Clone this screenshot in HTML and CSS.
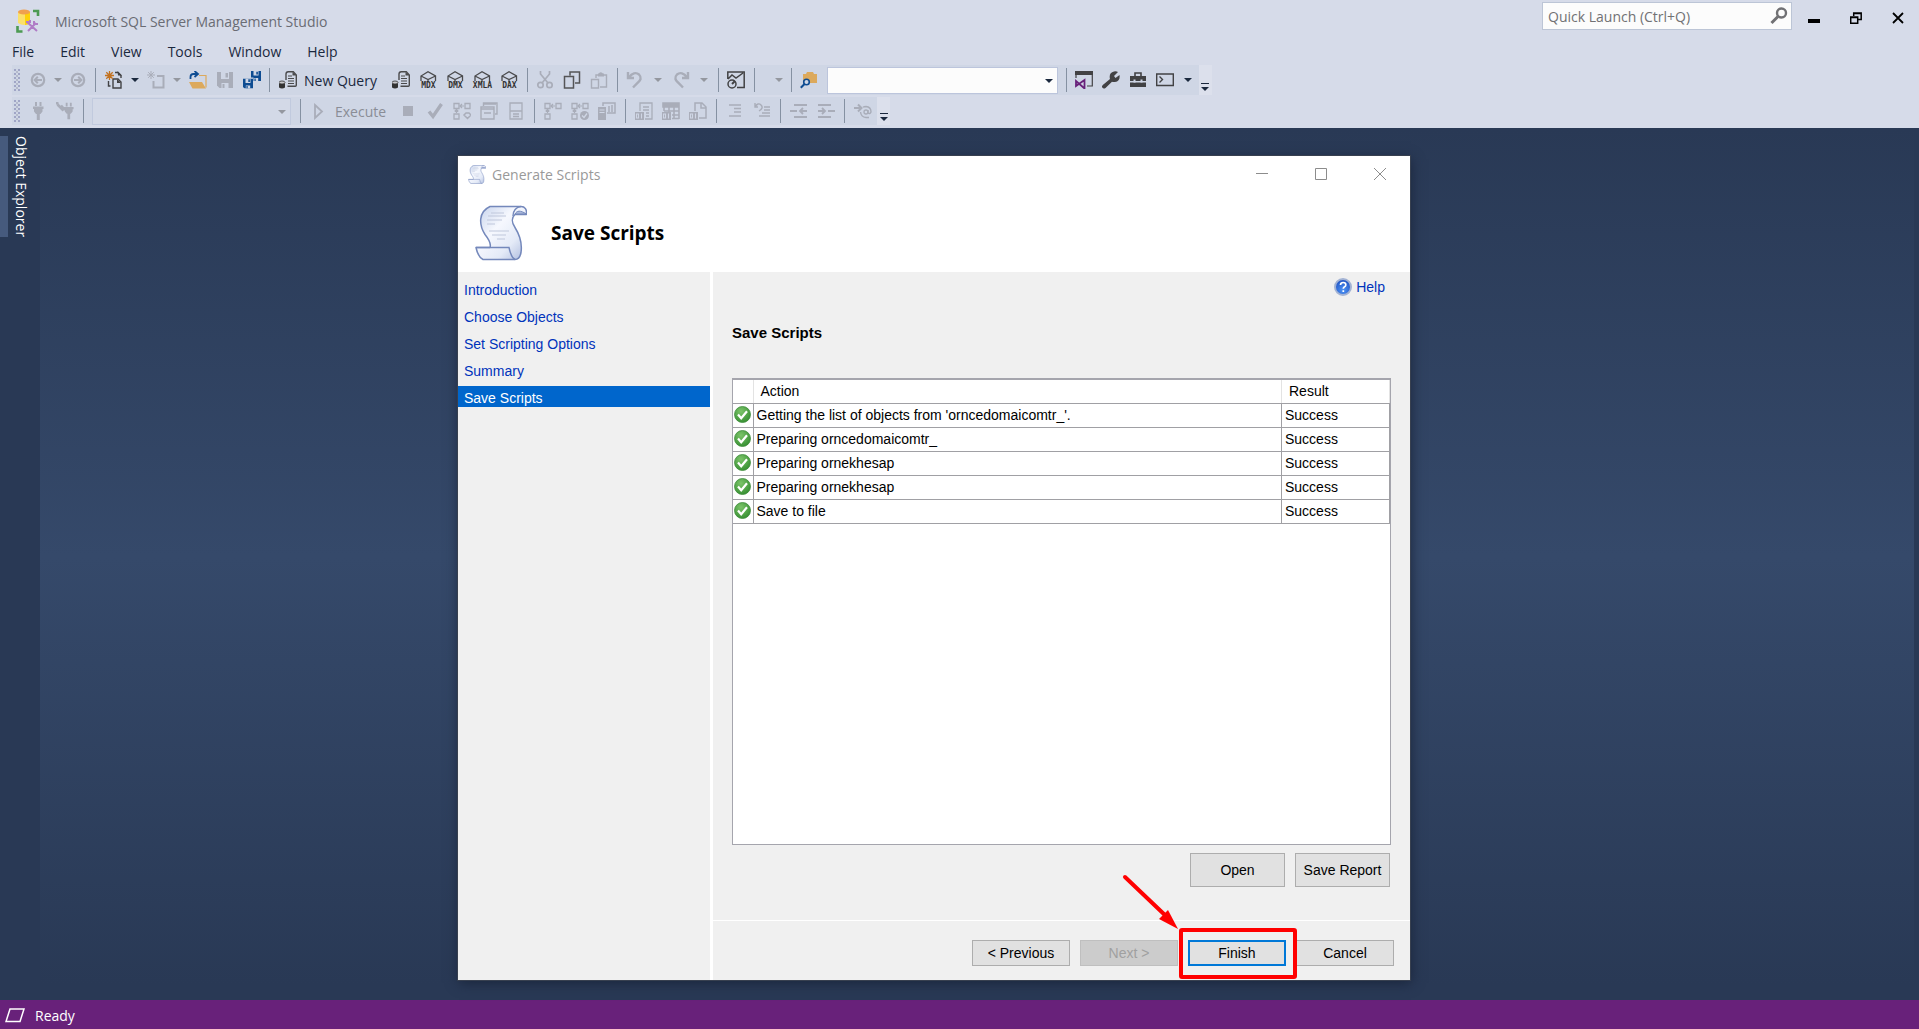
FILE: index.html
```html
<!DOCTYPE html>
<html lang="en">
<head>
  <meta charset="UTF-8" />
  <meta name="viewport" content="width=device-width, initial-scale=1.0"/>
  <title>Microsoft SQL Server Management Studio</title>
  <link rel="stylesheet" href="styles.css">
</head>
<body>
  <!-- shared icons -->
  <svg class="defs" width="0" height="0">
    <defs>
      <linearGradient id="paper" x1="0" y1="0" x2="1" y2="1">
        <stop offset="0" stop-color="#c3d0ea"/><stop offset=".4" stop-color="#f6f8fe"/><stop offset=".7" stop-color="#e4eaf7"/><stop offset="1" stop-color="#a9b8dc"/>
      </linearGradient>
      <radialGradient id="green" cx=".4" cy=".3" r=".8">
        <stop offset="0" stop-color="#7cc46a"/><stop offset="1" stop-color="#2f8a2c"/>
      </radialGradient>
      <radialGradient id="blue" cx=".5" cy=".7" r=".7">
        <stop offset="0" stop-color="#4d93f5"/><stop offset="1" stop-color="#1c4fc0"/>
      </radialGradient>
    </defs>
    <symbol id="i-scroll" viewBox="0 0 52 56">
      <path d="M15 1.500h31c4 0 6 3 5.500 8H40c-3.500 3-3.500 8 0 13 5 8 7.500 15 6 25-.8 4.500-2.500 7-6 7H8c-4-2-6-7-7-12h14c1.500-4-1-8-5-13C4 20 3 7 15 1.500z" fill="url(#paper)" stroke="#7488bb" stroke-width="1.500" stroke-linejoin="round"/>
      <path d="M1 42.500h33c1 5 2 10 6 12M38 11c0-5 3-9 8-9.500" fill="none" stroke="#7488bb" stroke-width="1.400"/>
      <path d="M40 9c2-3.500 5-4 11.500 0z" fill="#a9b8dc" stroke="#7488bb"/>
      <path d="M16 8h13M13 11h18M12 15h15M12 19h8M14 26h20M17 30h14M22 34h8" stroke="#c0c8dc" stroke-width="1.200"/>
    </symbol>
    <symbol id="i-ok" viewBox="0 0 17 17">
      <circle cx="8.500" cy="8.500" r="8" fill="url(#green)" stroke="#3f8d3c" stroke-width=".8"/>
      <path d="M4 8.500l3.200 3.700L13 5.200" fill="none" stroke="#fff" stroke-width="2.200"/>
    </symbol>
    <symbol id="i-query" viewBox="0 0 18 18">
      <path d="M7 9V3q0-2.300 2.300-2.300h5L17.300 4v10.300q0 1-1 1H8.500" fill="none" stroke="#4a4a4c" stroke-width="1.400"/>
      <path d="M13.500 1v3.500h4z" fill="#4a4a4c"/>
      <path d="M9 5h4M9 7.500h6M9 10h6M9 12.500h6" stroke="#4a4a4c" stroke-width="1.100"/>
      <path d="M0 11.500v5q3 2 6 0v-5z" fill="#333"/><ellipse cx="3" cy="11.500" rx="3" ry="1.500" fill="#c8c8cc" stroke="#333" stroke-width=".8"/>
    </symbol>
    <symbol id="i-cube" viewBox="0 0 18 11">
      <path d="M2 10V5l7-4.200L16.500 5v5M2 5l7 3.500L16.500 5M9 8.500V11" fill="none" stroke="#4a4a4c" stroke-width="1.300"/>
    </symbol>
    <symbol id="i-floppy" viewBox="0 0 16 16">
      <path d="M0 0h16v16H2.500L0 13.500z" fill="currentColor"/>
      <path d="M4 0h8v7H4zM4.500 11h7v5h-7z" fill="#cfd6e5"/><path d="M8.500 1H11v4.500H8.500zM5.500 12h2v4h-2z" fill="currentColor"/>
    </symbol>
    <symbol id="i-plan" viewBox="0 0 18 18">
      <path d="M1 1.500h5v5H1zM12 1.500h5v5h-5zM1 12h5v5H1z" fill="none" stroke="currentColor" stroke-width="1.300"/>
      <path d="M7 4h4M9 2L7 4l2 2M3.500 7.500V11M1.700 9.500l1.800-2 1.800 2" fill="none" stroke="currentColor" stroke-width="1.200"/>
    </symbol>
    <symbol id="i-binary" viewBox="0 0 9 8">
      <path d="M0 0h9v8H0z" fill="currentColor"/><path d="M1.500 2h2v4h-2zM6.500 1.500V6.500" fill="none" stroke="#cfd6e5" stroke-width="1.100"/>
    </symbol>
    <symbol id="i-plug" viewBox="0 0 12 18">
      <path d="M3 0h2v4H3zM7.500 0h2v4h-2zM1 4.500h10.500V7h-1v2.500L8.500 12H4L2 9.500V7H1zM4.800 12h3v6h-3z" fill="currentColor"/>
    </symbol>
    <symbol id="i-circle-arrow" viewBox="0 0 18 18">
      <circle cx="9" cy="9" r="6.200" fill="none" stroke="currentColor" stroke-width="2.200"/>
      <path d="M13 9H6M8.800 5.800L5.600 9l3.200 3.200" fill="none" stroke="currentColor" stroke-width="2"/>
    </symbol>
    <symbol id="i-undo" viewBox="0 0 18 18">
      <path d="M2 1v6h6M3 6.500C6 2 10 1 13 3.500c3 3 1.500 6-1 8L7 16.500" fill="none" stroke="currentColor" stroke-width="2.400"/>
    </symbol>
  </svg>

  <header class="top">
    <div class="title-row">
      <svg class="logo" viewBox="0 0 24 24">
        <path d="M2 3v11q6 4 12 0V3z" fill="#fbe06a"/><path d="M9 3v13q3 0 5-2V3z" fill="#fdd20a"/><ellipse cx="8" cy="3" rx="6" ry="2.500" fill="#f0a04e"/>
        <path d="M17 2h5v5M1.500 17v5.500h5" fill="none" stroke="#4c9a52" stroke-width="2.600"/>
        <path d="M12 22l8-8M11 13l10 9M10 13h4v-2M18 12v3h4" fill="none" stroke="#b07cc6" stroke-width="2"/>
      </svg>
      <h1>Microsoft SQL Server Management Studio</h1>
      <div class="search">
        <input type="text" placeholder="Quick Launch (Ctrl+Q)" aria-label="Quick Launch">
        <button aria-label="Search"><svg width="18" height="18" viewBox="0 0 18 18"><circle cx="11.500" cy="6" r="4.500" fill="none" stroke="#717174" stroke-width="2.400"/><path d="M8 9.500L1.500 16" stroke="#717174" stroke-width="3"/></svg></button>
      </div>
      <div class="window-buttons">
        <button aria-label="Minimize"><svg width="12" height="12"><path d="M0 7h12v4H0z"/></svg></button>
        <button aria-label="Restore"><svg width="12" height="12" fill="none" stroke="#000" stroke-width="1.500"><path d="M3.700 4V1h7.500v6.500H8M3.500 1.500h8"/><path d="M.7 5h7v6.200h-7zM.5 5.500h7.500"/></svg></button>
        <button aria-label="Close"><svg width="12" height="12"><path d="M1 1l10 10M11 1L1 11" stroke="#000" stroke-width="1.800"/></svg></button>
      </div>
    </div>

    <nav class="menu">
      <button>File</button>
      <button>Edit</button>
      <button>View</button>
      <button>Tools</button>
      <button>Window</button>
      <button>Help</button>
    </nav>

    <div class="toolbar">
      <span class="grip"></span>
      <button class="tool off" aria-label="Back"><svg><use href="#i-circle-arrow"/></svg></button>
      <button class="caret narrow off" aria-label="Back history"></button>
      <button class="tool off flip" aria-label="Forward"><svg><use href="#i-circle-arrow"/></svg></button>
      <span class="sep"></span>
      <button class="tool" aria-label="New Project"><svg viewBox="0 0 18 18">
        <path d="M10 1.500h3l3 3V7M3.500 10v5h2M8 8h5l3 3v6H8z" fill="none" stroke="#424244" stroke-width="1.400"/><path d="M12.500 0l4.500 4.500h-4zM12 8l4 4h-4z" fill="#424244"/>
        <path d="M4.500 0v9M0 4.500h9M1.300 1.300l6.400 6.400M7.700 1.300L1.300 7.700" stroke="#c27220" stroke-width="1.300"/></svg></button>
      <button class="caret" aria-label="New Project options"></button>
      <button class="tool off" aria-label="Add Item"><svg viewBox="0 0 18 18">
        <path d="M10 5h6.500v11.500h-10V10" fill="none" stroke="currentColor" stroke-width="2"/><path d="M4 0v8M0 4h8M1.200 1.200l5.600 5.600M6.800 1.200L1.200 6.800" stroke="currentColor"/></svg></button>
      <button class="caret off" aria-label="Add Item options"></button>
      <button class="tool" aria-label="Open"><svg viewBox="0 0 18 18">
        <path d="M10 4.500h7v12" fill="none" stroke="#dca95c" stroke-width="1.200"/><path d="M0 11h13l4 6.500H3.500z" fill="#dca95c"/>
        <path d="M1.500 8V6q0-3 3-3H8M5.500 0L9 3 5.500 6" fill="none" stroke="#0e4c92" stroke-width="1.800"/></svg></button>
      <button class="tool off" aria-label="Save"><svg viewBox="-1 -1 18 18"><use href="#i-floppy" width="16" height="16"/></svg></button>
      <button class="tool navy" aria-label="Save All"><svg viewBox="0 0 18 18"><use href="#i-floppy" x="8" width="10" height="10"/><path d="M0 6.500h10.500V18H0z" fill="#cfd6e5"/><use href="#i-floppy" y="7.500" width="10" height="10"/></svg></button>
      <span class="sep"></span>
      <button class="tool label"><svg><use href="#i-query"/></svg>New Query</button>
      <button class="tool" aria-label="Database Engine Query"><svg><use href="#i-query"/></svg></button>
      <button class="tool cube" aria-label="MDX Query"><svg><use href="#i-cube"/></svg><b>MDX</b></button>
      <button class="tool cube" aria-label="DMX Query"><svg><use href="#i-cube"/></svg><b>DMX</b></button>
      <button class="tool cube" aria-label="XMLA Query"><svg><use href="#i-cube"/></svg><b>XMLA</b></button>
      <button class="tool cube" aria-label="DAX Query"><svg><use href="#i-cube"/></svg><b>DAX</b></button>
      <span class="sep"></span>
      <button class="tool off" aria-label="Cut"><svg viewBox="0 0 18 18" fill="none" stroke="currentColor" stroke-width="1.700"><path d="M4.500 0v3L12 12M13.500 0v3L6 12"/><circle cx="4.500" cy="14" r="2.700"/><circle cx="13.500" cy="14" r="2.700"/></svg></button>
      <button class="tool" aria-label="Copy"><svg viewBox="0 0 18 18" fill="none" stroke="#555557" stroke-width="1.500"><path d="M7 4.500V1h9.500v11H12M1.500 5.500h9v11.500h-9z"/></svg></button>
      <button class="tool off" aria-label="Paste"><svg viewBox="0 0 18 18" fill="none" stroke="currentColor" stroke-width="1.400"><path d="M6 7V4h3q1.500-4 4 0h3.500v12H10M1.500 8.500h7v8.500h-7z"/><path d="M8 4h6" stroke-width="3"/></svg></button>
      <span class="sep"></span>
      <button class="tool off" aria-label="Undo"><svg><use href="#i-undo"/></svg></button>
      <button class="caret wide off" aria-label="Undo history"></button>
      <button class="tool off flip" aria-label="Redo"><svg><use href="#i-undo"/></svg></button>
      <button class="caret wide off" aria-label="Redo history"></button>
      <span class="sep"></span>
      <button class="tool" aria-label="Activity Monitor"><svg viewBox="0 0 18 18" fill="none" stroke="#424244" stroke-width="1.500"><path d="M.8 8V1h16.400v15.500H10M1 8l4-4 4 3 7-5"/><circle cx="5" cy="13" r="4"/><path d="M5 13l3-3" stroke-width="2"/></svg></button>
      <span class="sep"></span>
      <button class="caret alone off" aria-label="More actions"></button>
      <span class="sep"></span>
      <button class="tool" aria-label="Find in Files"><svg viewBox="0 0 18 18"><path d="M3 3h3l1-2h6l1 2h3v9H3z" fill="#dca95c"/><circle cx="6.500" cy="11" r="2.800" fill="#cfd6e5" stroke="#0e4c92" stroke-width="1.600"/><path d="M4.500 13L.8 16.800" stroke="#0e4c92" stroke-width="2"/></svg></button>
      <span class="combo find"><select aria-label="Find"><option></option></select></span>
      <span class="sep"></span>
      <button class="tool" aria-label="Visual Studio"><svg viewBox="0 0 18 18"><path d="M1 7V1h16.300v14H12" fill="none" stroke="#424244" stroke-width="1.200"/><path d="M0 0h18v4H0z" fill="#424244"/><path d="M1 10v5l8.500-6v8.500L1 10z" fill="none" stroke="#68217a" stroke-width="1.800"/></svg></button>
      <button class="tool" aria-label="Properties"><svg viewBox="0 0 18 18"><path d="M16 1l-4 4 1.500 2L17.500 4q1 6-4.500 7-2 .3-3-.3L3.500 17q-2 1.200-3.200-.4-.9-1.300.5-2.700L8 8Q6.500 2 12 .5q2-.5 4 .5z" fill="#424244"/></svg></button>
      <button class="tool" aria-label="Toolbox"><svg viewBox="0 0 18 18"><path d="M6 5V2h6v3" fill="none" stroke="#424244" stroke-width="1.600"/><path d="M1 5h16v5H1zM1 11.500h16V16H1z" fill="#424244"/><path d="M4.500 8.500v3h2v-3zM11.500 8.500v3h2v-3z" fill="#cfd6e5"/></svg></button>
      <button class="tool" aria-label="Command Window"><svg viewBox="0 0 18 18" fill="none" stroke="#424244" stroke-width="1.400"><path d="M.7 3h16.600v11.500H.7z"/><path d="M3.500 5.500l3 3-3 3"/></svg></button>
      <button class="caret wide" aria-label="Command Window options"></button>
      <button class="overflow" aria-label="Toolbar options"></button>
    </div>

    <div class="toolbar second">
      <span class="grip"></span>
      <button class="tool off" aria-label="Connect"><svg><use href="#i-plug"/></svg></button>
      <button class="tool off" aria-label="Change Connection"><svg viewBox="0 0 18 18"><use href="#i-plug" x="7" width="11" height="18"/><path d="M0 2l2-2M1.500 2.500l6 6M5 3.500L9 8" stroke="currentColor" stroke-width="2.600"/></svg></button>
      <span class="sep"></span>
      <span class="combo database"><select aria-label="Available Databases" disabled><option></option></select></span>
      <span class="sep"></span>
      <button class="tool label off"><svg viewBox="0 0 18 18"><path d="M5 3l7 6.500L5 16z" fill="none" stroke="#a9adb9" stroke-width="1.800"/></svg>Execute</button>
      <button class="tool off" aria-label="Stop"><svg viewBox="0 0 18 18"><path d="M4 4h10v10H4z" fill="currentColor"/></svg></button>
      <button class="tool off" aria-label="Parse"><svg viewBox="0 0 18 18"><path d="M3 9.500l4 5L15.500 2" fill="none" stroke="currentColor" stroke-width="3.400"/></svg></button>
      <button class="tool off" aria-label="Estimated Plan"><svg viewBox="0 0 18 18"><use href="#i-plan"/><path d="M11 13l2-2h3l2 2-3.500 3.500z" fill="none" stroke="currentColor" stroke-width="1.500"/></svg></button>
      <button class="tool off" aria-label="Query Options"><svg viewBox="0 0 18 18" fill="none" stroke="currentColor" stroke-width="1.400"><path d="M3.500 4V1H17v11h-2M1 5h13v12H1zM3 2h13M1 7h13M4 11h7"/></svg></button>
      <button class="tool off" aria-label="IntelliSense"><svg viewBox="0 0 18 18" fill="none" stroke="currentColor" stroke-width="1.300"><path d="M3 1h12v16H3zM3 9h12M6 12h6M6 14.500h6"/></svg></button>
      <span class="sep"></span>
      <button class="tool off" aria-label="Actual Plan"><svg><use href="#i-plan"/></svg></button>
      <button class="tool off" aria-label="Live Statistics"><svg viewBox="0 0 18 18"><use href="#i-plan"/><circle cx="13.500" cy="13.500" r="4.500" fill="currentColor"/><path d="M11 13.500l2 2 3-4" fill="none" stroke="#cfd6e5" stroke-width="1.300"/></svg></button>
      <button class="tool off" aria-label="Client Statistics"><svg viewBox="0 0 18 18"><path d="M0 5h8v13H0z" fill="currentColor"/><path d="M1.500 8h5M1.500 10.500h5" stroke="#cfd6e5"/><path d="M5 4V1h12v10H9M11 4v6M14 3v7" fill="none" stroke="currentColor" stroke-width="1.500"/></svg></button>
      <span class="sep"></span>
      <button class="tool off" aria-label="Results to Text"><svg viewBox="0 0 18 18"><path d="M5 9V1h12v16h-7M8 5h6M8 8h6M11 11h3M11 14h3" fill="none" stroke="currentColor" stroke-width="1.300"/><use href="#i-binary" y="10" width="9" height="8"/></svg></button>
      <button class="tool off" aria-label="Results to Grid"><svg viewBox="0 0 18 18"><path d="M1 1h16v4H1zM2 5v4M7 5v5M12 5v12M17 5v12M2 9h15M10 13h7M10 16.500h7" fill="none" stroke="currentColor" stroke-width="1.600"/><path d="M1 1h16v4H1z" fill="currentColor"/><use href="#i-binary" y="10" width="9" height="8"/></svg></button>
      <button class="tool off" aria-label="Results to File"><svg viewBox="0 0 18 18"><path d="M6 9V1h7l4 4v11h-7M12 1v5h5" fill="none" stroke="currentColor" stroke-width="1.500"/><use href="#i-binary" y="10" width="9" height="8"/></svg></button>
      <span class="sep"></span>
      <button class="tool off" aria-label="Comment"><svg viewBox="0 0 18 18"><path d="M3 3h12M8 6.500h7M8 10h7M3 14h12" stroke="currentColor" stroke-width="1.300"/></svg></button>
      <button class="tool off" aria-label="Uncomment"><svg viewBox="0 0 18 18"><path d="M2 1v4h3M2 5q3-5 6-2t-2 6M11 5h6M11 8h6M9 11h8M6 14h11" fill="none" stroke="currentColor" stroke-width="1.400"/></svg></button>
      <span class="sep"></span>
      <button class="tool off" aria-label="Decrease Indent"><svg viewBox="0 0 18 18"><path d="M4 3h13M0 9h7M4 15h13M17 9h-7M13 6l-3 3 3 3" fill="none" stroke="currentColor" stroke-width="1.800"/></svg></button>
      <button class="tool off" aria-label="Increase Indent"><svg viewBox="0 0 18 18"><path d="M1 3h13M11 9h7M1 15h13M1 9h7M5 6l3 3-3 3" fill="none" stroke="currentColor" stroke-width="1.800"/></svg></button>
      <span class="sep"></span>
      <button class="tool off" aria-label="Template Parameters"><svg viewBox="0 0 18 18"><path d="M0 6h7M4 2.500L7.500 6 4 9.500" fill="none" stroke="currentColor" stroke-width="2"/><circle cx="12" cy="10" r="2" fill="none" stroke="currentColor" stroke-width="1.300"/><path d="M14 8v3q2 1.500 3-1 0-5-5-5.500-2 0-3 .8M6.500 10q.5 5 5.500 5.500h3" fill="none" stroke="currentColor" stroke-width="1.400"/></svg></button>
      <button class="overflow" aria-label="Toolbar options"></button>
    </div>
  </header>

  <main class="desktop">
    <aside class="side-tabs"><button>Object Explorer</button></aside>
    <div class="canvas"></div>

    <section class="dialog">
      <div class="dialog-title">
        <svg width="18" height="19"><use href="#i-scroll"/></svg>
        <span>Generate Scripts</span>
        <button aria-label="Minimize"><svg width="12" height="12"><path d="M0 5.500h12"/></svg></button>
        <button aria-label="Maximize"><svg width="12" height="12"><path d="M.5.5h11v11H.5z"/></svg></button>
        <button aria-label="Close"><svg width="12" height="12"><path d="M0 0l12 12M12 0L0 12"/></svg></button>
      </div>
      <div class="banner">
        <svg width="52" height="56"><use href="#i-scroll"/></svg>
        <h2>Save Scripts</h2>
      </div>

      <div class="dialog-body">
        <ul class="steps">
          <li><a href="#">Introduction</a></li>
          <li><a href="#">Choose Objects</a></li>
          <li><a href="#">Set Scripting Options</a></li>
          <li><a href="#">Summary</a></li>
          <li class="current"><a href="#">Save Scripts</a></li>
        </ul>

        <div class="page">
          <div class="page-main">
            <a class="help" href="#">
              <svg width="18" height="18" viewBox="0 0 18 18"><circle cx="9" cy="9" r="8" fill="url(#blue)" stroke="#a3b3d4" stroke-width="2"/><path d="M6.500 7q0-2.500 2.700-2.500T11.800 7q0 1.300-1.500 2-1 .6-1 1.700M9.300 12.300v1.600" fill="none" stroke="#fff" stroke-width="1.700"/></svg>
              Help
            </a>
            <h3>Save Scripts</h3>
            <div class="list">
              <table>
                <thead>
                  <tr><th class="state"></th><th>Action</th><th class="result">Result</th></tr>
                </thead>
                <tbody>
                  <tr><td><svg><use href="#i-ok"/></svg></td><td>Getting the list of objects from 'orncedomaicomtr_'.</td><td>Success</td></tr>
                  <tr><td><svg><use href="#i-ok"/></svg></td><td>Preparing orncedomaicomtr_</td><td>Success</td></tr>
                  <tr><td><svg><use href="#i-ok"/></svg></td><td>Preparing ornekhesap</td><td>Success</td></tr>
                  <tr><td><svg><use href="#i-ok"/></svg></td><td>Preparing ornekhesap</td><td>Success</td></tr>
                  <tr><td><svg><use href="#i-ok"/></svg></td><td>Save to file</td><td>Success</td></tr>
                </tbody>
              </table>
            </div>
            <div class="report-buttons">
              <button class="btn">Open</button>
              <button class="btn">Save Report</button>
            </div>
          </div>
          <div class="wizard-buttons">
            <button class="btn">&lt; Previous</button>
            <button class="btn" disabled>Next &gt;</button>
            <button class="btn primary">Finish</button>
            <button class="btn">Cancel</button>
            <!-- arrow and frame that point at Finish -->
            <svg class="marker" width="176" height="106" viewBox="0 0 176 106">
              <path d="M3 4l42 40" stroke="#f00" stroke-width="4" stroke-linecap="round"/>
              <path d="M37 46l9-9 10 19z" fill="#f00"/>
              <rect x="59" y="57" width="114" height="47" rx="1" fill="none" stroke="#f00" stroke-width="4"/>
            </svg>
          </div>
        </div>
      </div>
    </section>
  </main>

  <footer class="status">
    <svg width="20" height="15"><path d="M5 1h14l-4 12.500H1z" fill="none" stroke="#fff" stroke-width="1.500"/></svg>
    <span>Ready</span>
  </footer>
</body>
</html>
```
FILE: styles.css
```css
* {
  box-sizing: border-box;
}

body {
  margin: 0;
  min-height: 100vh;
  display: flex;
  flex-direction: column;
  font-family: "Open Sans", "Noto Sans", sans-serif;
  font-size: 14px;
  color: #1b293e;
  background: #293955;
}

button {
  font: inherit;
  color: inherit;
  padding: 0;
  border: none;
  background: none;
}

.defs {
  position: absolute;
}

/* title, menu and toolbars */
.top {
  background: #d6dbe9;
  padding-bottom: 3px;
}

.title-row {
  display: flex;
  align-items: flex-start;
  height: 38px;
  padding-left: 16px;
}

.logo {
  width: 24px;
  height: 24px;
  margin-top: 9px;
}

h1 {
  flex: 1;
  margin: 11px 0 0 15px;
  font-size: 14px;
  line-height: 22px;
  font-weight: normal;
  color: #6a6c74;
}

.search {
  display: flex;
  width: 250px;
  height: 28px;
  margin-top: 2px;
  border: 1px solid #bcc5d6;
  background: #fcfcfc;
}

.search input {
  flex: 1;
  min-width: 0;
  padding: 0 5px;
  border: none;
  background: none;
  font: inherit;
}

.search input::placeholder {
  color: #717174;
}

.search button {
  width: 24px;
  padding-top: 4px;
}

.window-buttons {
  display: flex;
  margin-left: 1px;
}

.window-buttons button {
  width: 42px;
  height: 36px;
}

.menu {
  display: flex;
  height: 27px;
  margin-left: -1px;
}

.menu button {
  padding: 0 13px;
  line-height: 27px;
}

.toolbar {
  display: flex;
  align-items: center;
  width: max-content;
  height: 30px;
  margin-left: 12px;
  background: #cfd6e5;
}

.toolbar.second {
  height: 28px;
  margin-top: 2px;
}

.grip {
  width: 6px;
  height: 22px;
  margin: 0 4px 0 2px;
  background-image: radial-gradient(circle at 1px 1px, #a0a5c6 1px, transparent 1px), radial-gradient(circle at 3px 3px, #b4b9cb 1px, transparent 1px);
  background-size: 4px 4px;
}

.tool {
  display: flex;
  align-items: center;
  justify-content: center;
  width: 27px;
  height: 26px;
}

.tool svg {
  width: 18px;
  height: 18px;
}

.tool.label {
  width: auto;
  gap: 7px;
  padding: 0 11px 0 5px;
}

.tool.navy {
  color: #0e4c92;
}

.off {
  color: #a9adb9;
}

.tool.label.off {
  padding-right: 8px;
  color: #8a8d96;
}

.flip svg {
  transform: scaleX(-1);
}

.cube {
  flex-direction: column;
  color: #333;
}

.tool.cube svg {
  height: 11px;
}

.cube b {
  font: bold 8px/8px "DejaVu Sans Mono", monospace;
}

.caret {
  display: flex;
  justify-content: center;
  width: 15px;
}

.caret.narrow {
  width: 13px;
}

.caret.wide {
  width: 19px;
}

.caret.alone {
  width: 28px;
  padding-left: 12px;
}

.caret::before,
.combo::after {
  content: "";
  border: 4px solid transparent;
  border-top-color: #1b293e;
  border-bottom: none;
}

.caret.off::before,
.combo.database::after {
  border-top-color: #94979f;
}

.sep {
  width: 1px;
  height: 24px;
  margin: 0 4px;
  background: #8591a2;
}

.second .sep {
  margin-left: 5px;
}

.combo {
  position: relative;
  height: 27px;
  margin: 0 4px;
}

.combo::after {
  position: absolute;
  top: 12px;
  right: 5px;
  pointer-events: none;
}

.combo select {
  appearance: none;
  width: 100%;
  height: 100%;
  border: 1px solid #bcc5dc;
  background: #fcfcfc;
}

.combo.find {
  width: 231px;
}

.combo.database {
  width: 199px;
}

.database select {
  background: #d6dbe9;
}

.overflow {
  display: flex;
  flex-direction: column;
  align-items: center;
  justify-content: flex-end;
  align-self: stretch;
  gap: 3px;
  width: 13px;
  margin-left: 1px;
  padding-bottom: 4px;
  background: #dce0ec;
}

.overflow::before {
  content: "";
  width: 8px;
  height: 1px;
  background: #1b293e;
}

.overflow::after {
  content: "";
  border: 4px solid transparent;
  border-top-color: #1b293e;
  border-bottom: none;
}

/* work area */
.desktop {
  position: relative;
  flex: 1;
  display: flex;
}

.side-tabs {
  width: 40px;
  padding-top: 8px;
}

.side-tabs button {
  writing-mode: vertical-rl;
  border-left: 8px solid #465a7d;
  padding-left: 3px;
  line-height: 20px;
  color: #fff;
}

.canvas {
  flex: 1;
  margin: 0 5px 15px 0;
  background: linear-gradient(#293955, #35496a 50%, #293955);
}

.dialog {
  position: absolute;
  top: 28px;
  bottom: 20px;
  left: 458px;
  width: 952px;
  display: flex;
  flex-direction: column;
  background: #fff;
  color: #000;
  font-family: "Liberation Sans", Arial, sans-serif;
  box-shadow: 0 0 0 1px #38404f, 1px 3px 12px #1a253b;
}

.dialog-title {
  display: flex;
  align-items: center;
  height: 36px;
  padding: 0 1px 0 10px;
  color: #999;
  font-family: "Open Sans", "Noto Sans", sans-serif;
}

.dialog-title span {
  flex: 1;
  padding-left: 6px;
}

.dialog-title button {
  width: 59px;
  height: 36px;
}

.dialog-title button svg {
  fill: none;
  stroke: #8c8c8c;
}

.banner {
  display: flex;
  align-items: center;
  height: 80px;
  padding: 2px 0 0 17px;
}

.banner h2 {
  margin: 0 0 0 24px;
  font: bold 19px "Open Sans", "Noto Sans", sans-serif;
}

.dialog-body {
  flex: 1;
  display: flex;
}

.steps {
  width: 252px;
  margin: 0 3px 0 0;
  padding: 6px 0 0;
  list-style: none;
  background: #f0f0f0;
}

.steps li {
  height: 21px;
  margin-bottom: 6px;
  padding: 2px 6px 0;
  line-height: 20px;
}

.steps a,
.help {
  color: #0033bb;
  text-decoration: none;
}

.steps .current {
  background: #0066cc;
}

.steps .current a {
  color: #fff;
}

.page {
  flex: 1;
  display: flex;
  flex-direction: column;
  background: #f0f0f0;
}

.page-main {
  flex: 1;
  display: flex;
  flex-direction: column;
  padding: 6px 19px 0;
}

.help {
  align-self: flex-end;
  display: flex;
  align-items: center;
  gap: 4px;
  height: 18px;
  margin-right: 6px;
}

h3 {
  margin: 28px 0 36px;
  font-size: 15px;
  line-height: 18px;
}

.list {
  flex: 1;
  border: 1px solid #a5a5ad;
  border-top-width: 2px;
  background: #fff;
}

table {
  width: 100%;
  border-collapse: collapse;
  table-layout: fixed;
}

th,
td {
  height: 24px;
  padding: 0 3px;
  border: 1px solid #a0a0a4;
  border-left: none;
  text-align: left;
}

th {
  height: 23px;
  padding: 0 7px;
  border-top: none;
  border-right-color: #e3e3e3;
  font-weight: normal;
}

td:first-child {
  padding: 0 0 1px 1px;
}

td svg {
  display: block;
  width: 17px;
  height: 17px;
}

.state {
  width: 20px;
}

.result {
  width: 108px;
}

.btn {
  border: 1px solid #adadad;
  background: #e1e1e1;
}

.report-buttons {
  display: flex;
  gap: 10px;
  height: 75px;
  padding: 8px 1px 0 0;
  justify-content: flex-end;
}

.report-buttons .btn {
  width: 95px;
  height: 34px;
}

.wizard-buttons {
  position: relative;
  display: flex;
  justify-content: flex-end;
  gap: 10px;
  height: 60px;
  padding: 19px 16px 0;
  border-top: 1px solid #fff;
}

.wizard-buttons .btn {
  width: 98px;
  height: 26px;
}

.btn:disabled {
  border-color: #bfbfbf;
  background: #ccc;
  color: #a0a0a0;
}

.btn.primary {
  border: 2px solid #0078d7;
}

.marker {
  position: absolute;
  right: 112px;
  bottom: 1px;
  pointer-events: none;
}

.status {
  display: flex;
  align-items: center;
  gap: 10px;
  height: 29px;
  padding: 2px 0 0 5px;
  background: #68217a;
  color: #fff;
}
```
